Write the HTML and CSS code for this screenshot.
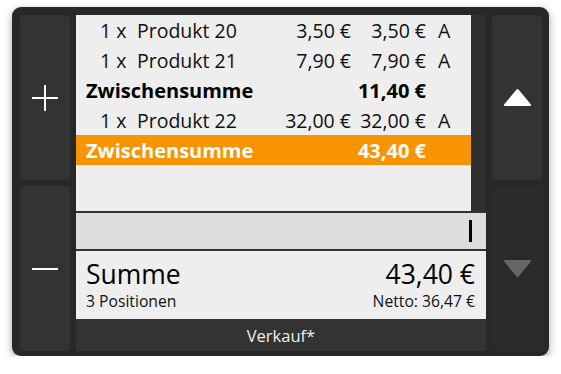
FILE: index.html
```html
<!DOCTYPE html>
<html lang="de">
<head>
    <meta charset="utf-8"/>
    <meta name="viewport" content="width=device-width, initial-scale=1.0"/>
    <title>Kasse - Verkauf</title>
    <link rel="stylesheet" href="styles.css">
</head>
<body>
<div class="terminal">
    <div class="side-col">
        <button class="side-btn">
            <svg width="26" height="26" viewBox="0 0 26 26"><path d="M13 0V26M0 13H26" stroke="#fff" stroke-width="2"/></svg>
        </button>
        <button class="side-btn">
            <svg width="26" height="26" viewBox="0 0 26 26"><path d="M0 13H26" stroke="#fff" stroke-width="2"/></svg>
        </button>
    </div>

    <div class="main-col">
        <div class="receipt">
            <div class="lines">
                <div class="line">
                    <span class="name"><span class="qty">1 x</span>Produkt 20</span>
                    <span class="price">3,50 €</span>
                    <span class="total">3,50 €</span>
                    <span class="tax">A</span>
                </div>
                <div class="line">
                    <span class="name"><span class="qty">1 x</span>Produkt 21</span>
                    <span class="price">7,90 €</span>
                    <span class="total">7,90 €</span>
                    <span class="tax">A</span>
                </div>
                <div class="line subtotal">
                    <span class="name">Zwischensumme</span>
                    <span class="price"></span>
                    <span class="total">11,40 €</span>
                    <span class="tax"></span>
                </div>
                <div class="line">
                    <span class="name"><span class="qty">1 x</span>Produkt 22</span>
                    <span class="price">32,00 €</span>
                    <span class="total">32,00 €</span>
                    <span class="tax">A</span>
                </div>
                <div class="line subtotal selected">
                    <span class="name">Zwischensumme</span>
                    <span class="price"></span>
                    <span class="total">43,40 €</span>
                    <span class="tax"></span>
                </div>
            </div>
            <div class="scroll-track"></div>
        </div>

        <div class="input-row">
            <span class="cursor"></span>
        </div>

        <div class="summary">
            <div class="summary-left">
                <div class="sum-label">Summe</div>
                <div class="sum-sub">3 Positionen</div>
            </div>
            <div class="summary-right">
                <div class="sum-value">43,40 €</div>
                <div class="sum-sub">Netto: 36,47 €</div>
            </div>
        </div>

        <div class="mode-bar">Verkauf*</div>
    </div>

    <div class="side-col">
        <button class="side-btn">
            <svg width="29" height="19" viewBox="0 0 29 19"><path d="M14.5 2L27 17H2Z" fill="#fff" stroke="#fff" stroke-width="2" stroke-linejoin="round"/></svg>
        </button>
        <button class="side-btn disabled">
            <svg width="29" height="19" viewBox="0 0 29 19"><path d="M14.5 17L27 2H2Z" fill="#666" stroke="#666" stroke-width="2" stroke-linejoin="round"/></svg>
        </button>
    </div>
</div>
</body>
</html>
```

FILE: styles.css
```css
* {
    box-sizing: border-box;
}

body {
    margin: 0;
    background-color: #fff;
    font-family: "Open Sans", "Noto Sans", sans-serif;
}

.terminal {
    display: flex;
    gap: 6px;
    width: 537px;
    height: 349px;
    margin: 7px 0 0 12px;
    padding: 8px 6px 5px 8px;
    background-color: #282828;
    border-radius: 9px;
    box-shadow: 0 3px 8px rgba(0, 0, 0, 0.35);
}

.side-col {
    display: flex;
    flex-direction: column;
    gap: 6px;
    width: 50px;
}

.side-btn {
    flex: 1;
    display: flex;
    align-items: center;
    justify-content: center;
    padding: 0;
    border: none;
    border-radius: 4px;
    background-color: #333;
}

.side-btn.disabled {
    background-color: #2b2b2b;
}

.main-col {
    display: flex;
    flex-direction: column;
    width: 410px;
}

.receipt {
    display: flex;
    height: 196px;
}

.lines {
    flex: 1;
    background-color: #eee;
}

.scroll-track {
    width: 15px;
    background-color: #303030;
}

.line {
    display: grid;
    grid-template-columns: 1fr 75px 75px 45px;
    align-items: center;
    height: 30px;
    padding-left: 10px;
    font-size: 19.5px;
    color: #111;
}

.qty {
    display: inline-block;
    width: 37px;
    margin-left: 14px;
}

.price,
.total {
    text-align: right;
    white-space: nowrap;
}

.tax {
    padding-left: 12px;
}

.subtotal {
    font-size: 20px;
    font-weight: bold;
    color: #000;
}

.selected {
    background-color: #f79400;
    color: #fff;
}

.input-row {
    display: flex;
    justify-content: flex-end;
    align-items: center;
    height: 40px;
    padding-right: 14px;
    background-color: #ddd;
    border-top: 2px solid #333;
    border-bottom: 2px solid #333;
}

.cursor {
    width: 3px;
    height: 22px;
    background-color: #000;
}

.summary {
    display: flex;
    justify-content: space-between;
    height: 68px;
    padding: 5px 11px 0 10px;
    background-color: #eee;
    color: #000;
}

.summary-right {
    text-align: right;
}

.sum-label,
.sum-value {
    font-size: 26.5px;
    line-height: 36px;
}

.sum-sub {
    font-size: 15.7px;
    line-height: 18px;
    color: #111;
}

.mode-bar {
    flex: 1;
    display: flex;
    align-items: center;
    justify-content: center;
    background-color: #333;
    color: #eee;
    font-size: 16.5px;
}
```
